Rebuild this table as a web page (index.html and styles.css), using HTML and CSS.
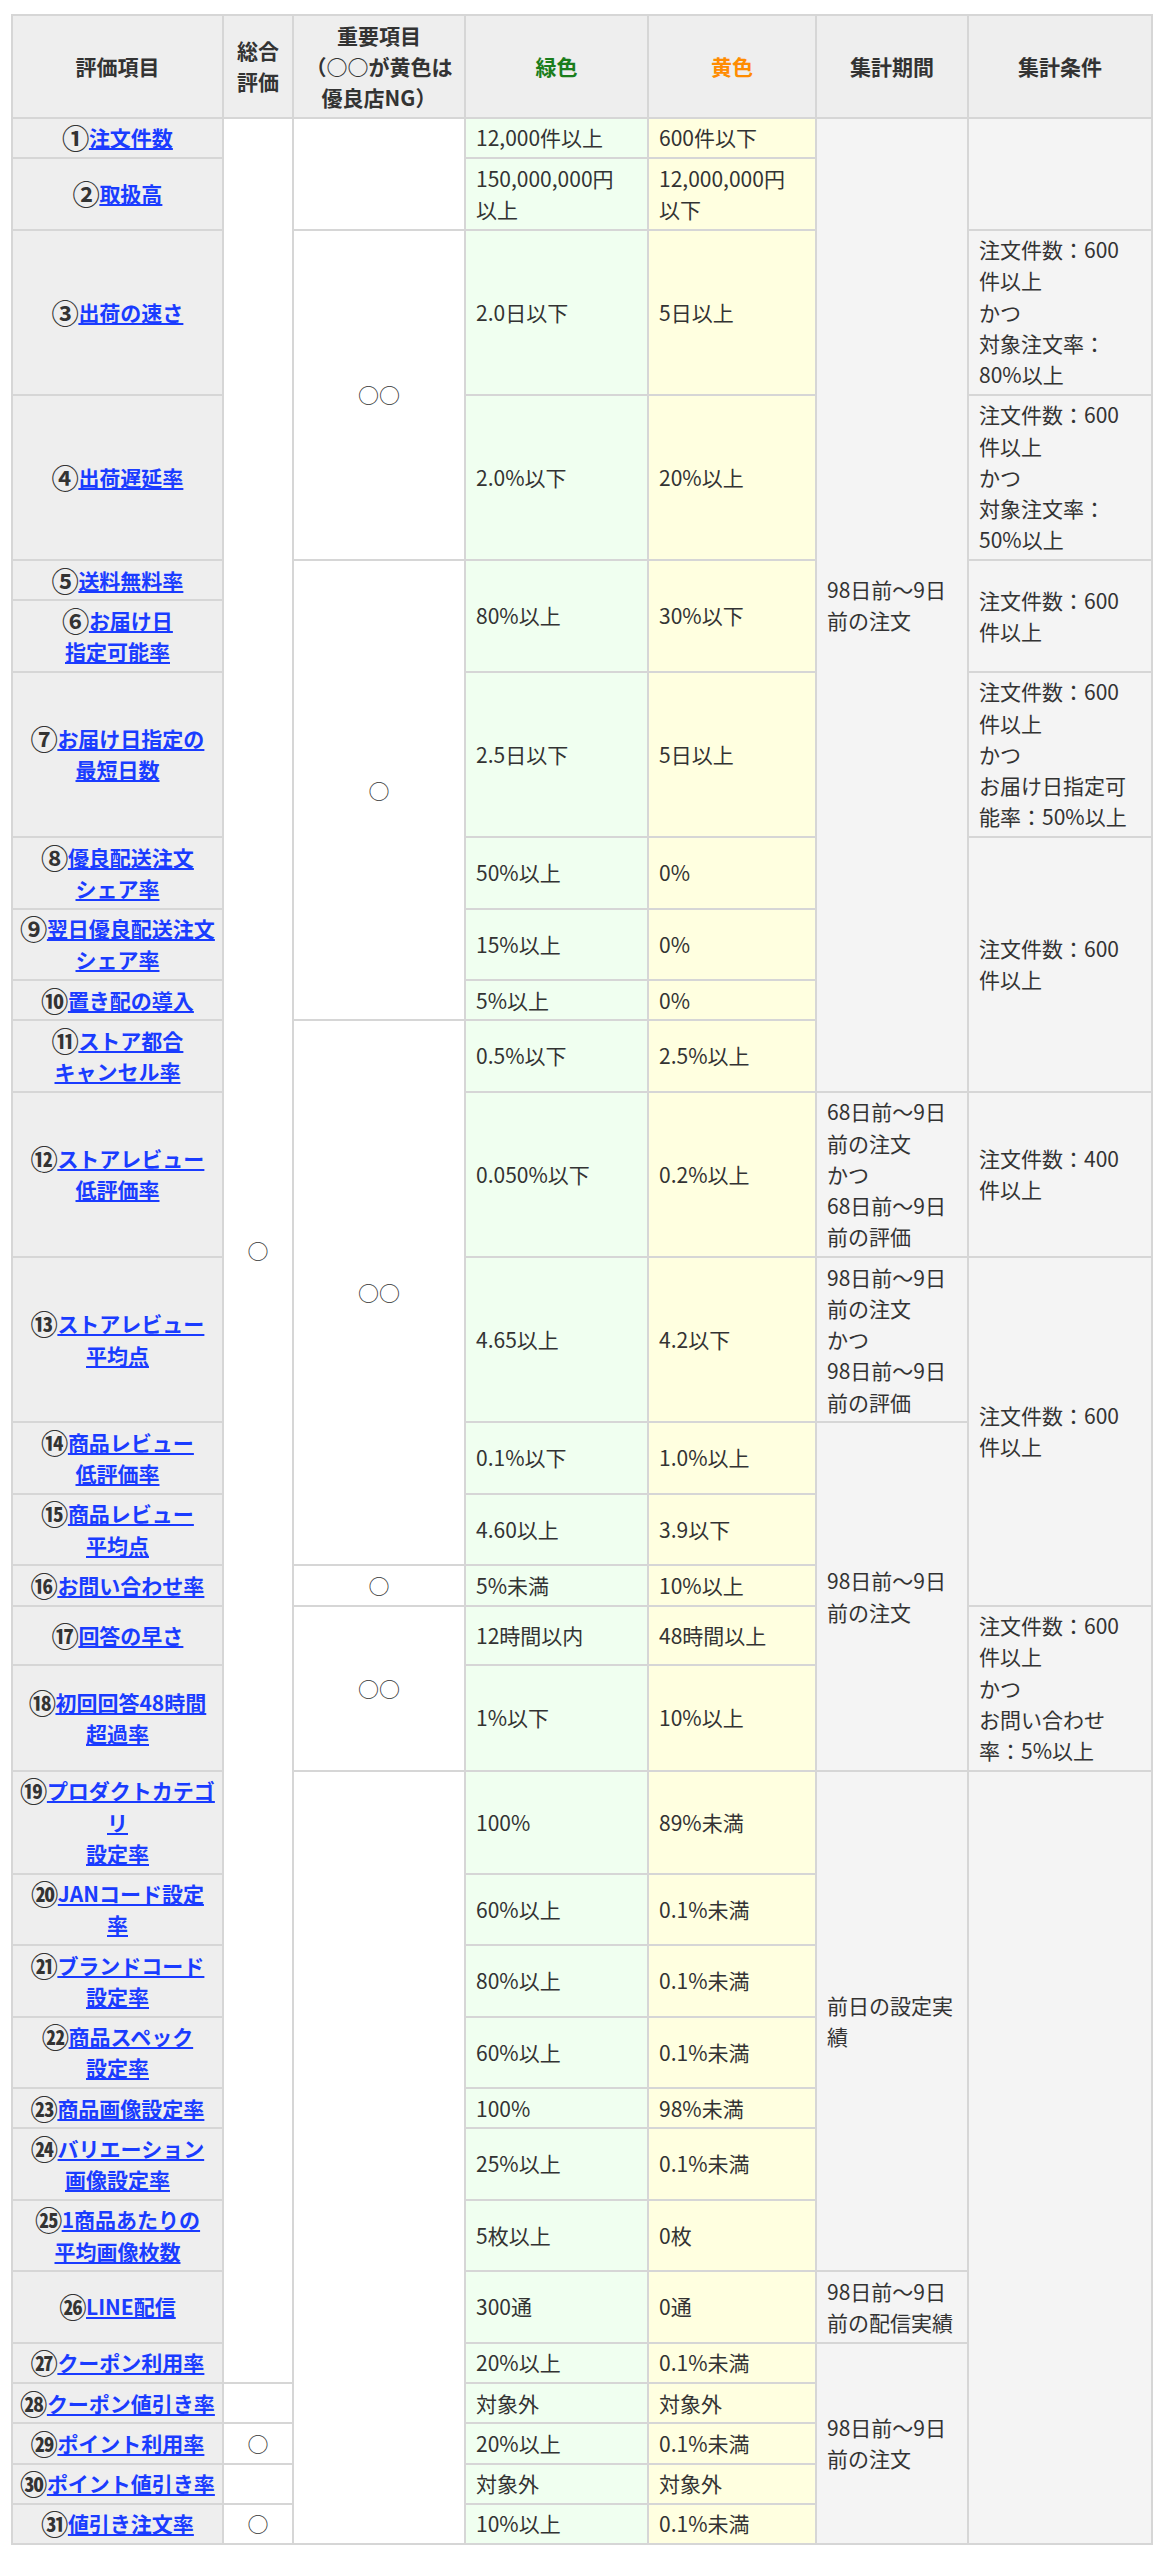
FILE: index.html
```html
<!DOCTYPE html>
<html lang="ja">
<head>
<meta charset="utf-8">
<title>評価項目</title>
<link rel="stylesheet" href="styles.css">
</head>
<body>
<div class="page">
<table class="eval">
<colgroup>
<col class="c-item"><col class="c-total"><col class="c-key"><col class="c-green"><col class="c-yellow"><col class="c-period"><col class="c-cond">
</colgroup>
<thead>
<tr>
<th>評価項目</th>
<th>総合<br>評価</th>
<th>重要項目<br>（○○が黄色は<br>優良店NG）</th>
<th class="h-green">緑色</th>
<th class="h-yellow">黄色</th>
<th>集計期間</th>
<th>集計条件</th>
</tr>
</thead>
<tbody>
<tr>
<th class="item"><span class="num">①</span><a href="#">注文件数</a></th>
<td class="mark" rowspan="27">○</td>
<td class="mark" rowspan="2"></td>
<td class="g">12,000件以上</td>
<td class="y">600件以下</td>
<td class="info" rowspan="11">98日前〜9日<br>前の注文</td>
<td class="info" rowspan="2"></td>
</tr>
<tr>
<th class="item"><span class="num">②</span><a href="#">取扱高</a></th>
<td class="g">150,000,000円<br>以上</td>
<td class="y">12,000,000円<br>以下</td>
</tr>
<tr>
<th class="item"><span class="num">③</span><a href="#">出荷の速さ</a></th>
<td class="mark" rowspan="2">○○</td>
<td class="g">2.0日以下</td>
<td class="y">5日以上</td>
<td class="info">注文件数：600<br>件以上<br>かつ<br>対象注文率：<br>80%以上</td>
</tr>
<tr>
<th class="item"><span class="num">④</span><a href="#">出荷遅延率</a></th>
<td class="g">2.0%以下</td>
<td class="y">20%以上</td>
<td class="info">注文件数：600<br>件以上<br>かつ<br>対象注文率：<br>50%以上</td>
</tr>
<tr>
<th class="item"><span class="num">⑤</span><a href="#">送料無料率</a></th>
<td class="mark" rowspan="6">○</td>
<td class="g" rowspan="2">80%以上</td>
<td class="y" rowspan="2">30%以下</td>
<td class="info" rowspan="2">注文件数：600<br>件以上</td>
</tr>
<tr>
<th class="item"><span class="num">⑥</span><a href="#">お届け日<br>指定可能率</a></th>
</tr>
<tr>
<th class="item"><span class="num">⑦</span><a href="#">お届け日指定の<br>最短日数</a></th>
<td class="g">2.5日以下</td>
<td class="y">5日以上</td>
<td class="info">注文件数：600<br>件以上<br>かつ<br>お届け日指定可<br>能率：50%以上</td>
</tr>
<tr>
<th class="item"><span class="num">⑧</span><a href="#">優良配送注文<br>シェア率</a></th>
<td class="g">50%以上</td>
<td class="y">0%</td>
<td class="info" rowspan="4">注文件数：600<br>件以上</td>
</tr>
<tr>
<th class="item"><span class="num">⑨</span><a href="#">翌日優良配送注文<br>シェア率</a></th>
<td class="g">15%以上</td>
<td class="y">0%</td>
</tr>
<tr>
<th class="item"><span class="num">⑩</span><a href="#">置き配の導入</a></th>
<td class="g">5%以上</td>
<td class="y">0%</td>
</tr>
<tr>
<th class="item"><span class="num">⑪</span><a href="#">ストア都合<br>キャンセル率</a></th>
<td class="mark" rowspan="5">○○</td>
<td class="g">0.5%以下</td>
<td class="y">2.5%以上</td>
</tr>
<tr>
<th class="item"><span class="num">⑫</span><a href="#">ストアレビュー<br>低評価率</a></th>
<td class="g">0.050%以下</td>
<td class="y">0.2%以上</td>
<td class="info">68日前〜9日<br>前の注文<br>かつ<br>68日前〜9日<br>前の評価</td>
<td class="info">注文件数：400<br>件以上</td>
</tr>
<tr>
<th class="item"><span class="num">⑬</span><a href="#">ストアレビュー<br>平均点</a></th>
<td class="g">4.65以上</td>
<td class="y">4.2以下</td>
<td class="info">98日前〜9日<br>前の注文<br>かつ<br>98日前〜9日<br>前の評価</td>
<td class="info" rowspan="4">注文件数：600<br>件以上</td>
</tr>
<tr>
<th class="item"><span class="num">⑭</span><a href="#">商品レビュー<br>低評価率</a></th>
<td class="g">0.1%以下</td>
<td class="y">1.0%以上</td>
<td class="info" rowspan="5">98日前〜9日<br>前の注文</td>
</tr>
<tr>
<th class="item"><span class="num">⑮</span><a href="#">商品レビュー<br>平均点</a></th>
<td class="g">4.60以上</td>
<td class="y">3.9以下</td>
</tr>
<tr>
<th class="item"><span class="num">⑯</span><a href="#">お問い合わせ率</a></th>
<td class="mark">○</td>
<td class="g">5%未満</td>
<td class="y">10%以上</td>
</tr>
<tr>
<th class="item"><span class="num">⑰</span><a href="#">回答の早さ</a></th>
<td class="mark" rowspan="2">○○</td>
<td class="g">12時間以内</td>
<td class="y">48時間以上</td>
<td class="info" rowspan="2">注文件数：600<br>件以上<br>かつ<br>お問い合わせ<br>率：5%以上</td>
</tr>
<tr>
<th class="item"><span class="num">⑱</span><a href="#">初回回答48時間<br>超過率</a></th>
<td class="g">1%以下</td>
<td class="y">10%以上</td>
</tr>
<tr>
<th class="item"><span class="num">⑲</span><a href="#">プロダクトカテゴ<br>リ<br>設定率</a></th>
<td class="mark" rowspan="13"></td>
<td class="g">100%</td>
<td class="y">89%未満</td>
<td class="info" rowspan="7">前日の設定実<br>績</td>
<td class="info" rowspan="13"></td>
</tr>
<tr>
<th class="item"><span class="num">⑳</span><a href="#">JANコード設定<br>率</a></th>
<td class="g">60%以上</td>
<td class="y">0.1%未満</td>
</tr>
<tr>
<th class="item"><span class="num">㉑</span><a href="#">ブランドコード<br>設定率</a></th>
<td class="g">80%以上</td>
<td class="y">0.1%未満</td>
</tr>
<tr>
<th class="item"><span class="num">㉒</span><a href="#">商品スペック<br>設定率</a></th>
<td class="g">60%以上</td>
<td class="y">0.1%未満</td>
</tr>
<tr>
<th class="item"><span class="num">㉓</span><a href="#">商品画像設定率</a></th>
<td class="g">100%</td>
<td class="y">98%未満</td>
</tr>
<tr>
<th class="item"><span class="num">㉔</span><a href="#">バリエーション<br>画像設定率</a></th>
<td class="g">25%以上</td>
<td class="y">0.1%未満</td>
</tr>
<tr>
<th class="item"><span class="num">㉕</span><a href="#">1商品あたりの<br>平均画像枚数</a></th>
<td class="g">5枚以上</td>
<td class="y">0枚</td>
</tr>
<tr>
<th class="item"><span class="num">㉖</span><a href="#">LINE配信</a></th>
<td class="g">300通</td>
<td class="y">0通</td>
<td class="info">98日前〜9日<br>前の配信実績</td>
</tr>
<tr>
<th class="item"><span class="num">㉗</span><a href="#">クーポン利用率</a></th>
<td class="g">20%以上</td>
<td class="y">0.1%未満</td>
<td class="info" rowspan="5">98日前〜9日<br>前の注文</td>
</tr>
<tr>
<th class="item"><span class="num">㉘</span><a href="#">クーポン値引き率</a></th>
<td class="mark"></td>
<td class="g">対象外</td>
<td class="y">対象外</td>
</tr>
<tr>
<th class="item"><span class="num">㉙</span><a href="#">ポイント利用率</a></th>
<td class="mark">○</td>
<td class="g">20%以上</td>
<td class="y">0.1%未満</td>
</tr>
<tr>
<th class="item"><span class="num">㉚</span><a href="#">ポイント値引き率</a></th>
<td class="mark"></td>
<td class="g">対象外</td>
<td class="y">対象外</td>
</tr>
<tr>
<th class="item"><span class="num">㉛</span><a href="#">値引き注文率</a></th>
<td class="mark">○</td>
<td class="g">10%以上</td>
<td class="y">0.1%未満</td>
</tr>
</tbody>
</table>
</div>
</body>
</html>
```

FILE: styles.css
```css
html, body {
  margin: 0;
  padding: 0;
  background: #ffffff;
}

body {
  font-family: "Noto Sans CJK JP", "Noto Sans", sans-serif;
  font-size: 21px;
  line-height: 31.25px;
  color: #333333;
}

.page {
  padding: 14px 0 0 11px;
}

.eval {
  border-collapse: collapse;
  table-layout: fixed;
  width: 1140px;
}

.c-item { width: 211px; }
.c-total { width: 70px; }
.c-key { width: 172px; }
.c-green { width: 183px; }
.c-yellow { width: 168px; }
.c-period { width: 152px; }
.c-cond { width: 184px; }

.eval th,
.eval td {
  border: 2px solid #d6d6d6;
  padding: 3.5px 10px;
  white-space: nowrap;
  vertical-align: middle;
}

.eval td {
  text-align: left;
  font-weight: normal;
}

.eval thead th {
  background: #eeeeee;
  font-weight: bold;
  text-align: center;
  color: #333333;
}

.eval thead th.h-green {
  color: #1b7d1b;
}

.eval thead th.h-yellow {
  color: #ff8c00;
}

.eval th.item {
  background: #eeeeee;
  font-weight: bold;
  text-align: center;
  padding-left: 4px;
  padding-right: 4px;
}

.eval th.item .num {
  font-size: 1.3em;
  line-height: 0;
  vertical-align: -0.12em;
  letter-spacing: -0.02em;
}

.eval th.item a {
  color: #1a3cff;
  text-decoration: underline;
}

.eval td.mark {
  background: #ffffff;
  text-align: center;
}

.eval td.g {
  background: #f0fff0;
}

.eval td.y {
  background: #ffffe0;
}

.eval td.info {
  background: #f4f4f4;
}
```
